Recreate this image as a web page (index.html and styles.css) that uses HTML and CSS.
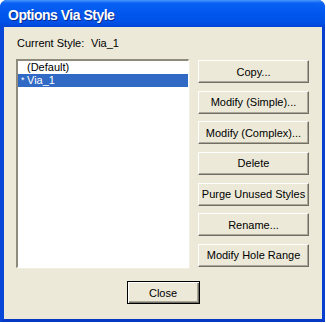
FILE: index.html
```html
<!DOCTYPE html>
<html>
	<head>
		<meta charset="utf-8">
		<title>Options Via Style</title>
		<link rel="stylesheet" href="styles.css">
	</head>
	<body>
		<div class="window">
			<div class="titlebar">
				<span class="title">Options Via Style</span>
			</div>
			<div class="client">
				<div class="current">
					<span class="current-label">Current Style:</span>
					<span class="current-value">Via_1</span>
				</div>
				<div class="main">
					<ul class="listbox">
						<li class="item"><span class="mark"></span>(Default)</li>
						<li class="item selected"><span class="mark">*</span>Via_1</li>
					</ul>
					<div class="buttons">
						<button class="btn" type="button">Copy...</button>
						<button class="btn" type="button">Modify (Simple)...</button>
						<button class="btn" type="button">Modify (Complex)...</button>
						<button class="btn" type="button">Delete</button>
						<button class="btn" type="button">Purge Unused Styles</button>
						<button class="btn" type="button">Rename...</button>
						<button class="btn" type="button">Modify Hole Range</button>
					</div>
				</div>
				<div class="footer">
					<button class="btn btn-default" type="button">Close</button>
				</div>
			</div>
		</div>
	</body>
</html>
```

FILE: styles.css
```css
body{
	margin: 0;
	background: #ffffff;
	font-family: "Liberation Sans", Arial, sans-serif;
	font-size: 11px;
	color: #000000;
}
.window{
	width: 325px;
	height: 322px;
	display: flex;
	flex-direction: column;
	box-sizing: border-box;
	border-left: 4px solid #0848d8;
	border-right: 3px solid #0740d0;
	border-bottom: 3px solid #0538c4;
	border-radius: 7px 7px 0 0;
	background: #0848d8;
}
.titlebar{
	height: 27px;
	margin-left: -4px;
	margin-right: -3px;
	padding-left: 8px;
	display: flex;
	align-items: center;
	border-radius: 7px 7px 0 0;
	background: linear-gradient(#4a98ff 0, #0b61f5 3px, #0058ee 45%, #0052e8 80%, #0046d6 100%);
}
.title{
	color: #ffffff;
	font-weight: bold;
	font-size: 14px;
	letter-spacing: -0.5px;
	text-shadow: 1px 1px 0 #0a2a8a;
	padding-top: 2px;
}
.client{
	flex: 1;
	background: #ece9d8;
	display: flex;
	flex-direction: column;
	padding: 10px 0 0 12px;
}
.current{
	height: 13px;
	line-height: 13px;
	padding-left: 1px;
	display: flex;
}
.current-label{
	width: 74px;
}
.main{
	display: flex;
	gap: 9px;
	margin-top: 9px;
}
.listbox{
	list-style: none;
	margin: 0;
	padding: 0;
	width: 173px;
	height: 209px;
	box-sizing: border-box;
	background: #ffffff;
	border-top: 2px solid #8e8b7d;
	border-left: 2px solid #8e8b7d;
	border-right: 1px solid #ffffff;
	border-bottom: 1px solid #ffffff;
	box-shadow: 1px 1px 0 #f1efe2;
}
.item{
	height: 13px;
	line-height: 13px;
	padding-left: 3px;
	display: flex;
	white-space: nowrap;
}
.mark{
	width: 6px;
	font-size: 9px;
}
.selected{
	background: #316ac5;
	color: #ffffff;
}
.buttons{
	display: flex;
	flex-direction: column;
	gap: 7.67px;
	padding-top: 1px;
}
.btn{
	width: 111px;
	height: 23px;
	padding: 0;
	margin: 0;
	font-family: "Liberation Sans", Arial, sans-serif;
	font-size: 11px;
	color: #000000;
	background: #ece9d8;
	border: 1px solid;
	border-color: #ffffff #716f64 #716f64 #ffffff;
	box-shadow: inset -1px -1px 0 #aca899;
	border-radius: 0;
}
.footer{
	display: flex;
	justify-content: center;
	padding-right: 12px;
	margin-top: 13px;
}
.btn-default{
	width: 73px;
	height: 23px;
	border: 1px solid #000000;
	box-shadow: inset 1px 1px 0 #ffffff, inset -1px -1px 0 #716f64, inset -2px -2px 0 #aca899;
}
```
